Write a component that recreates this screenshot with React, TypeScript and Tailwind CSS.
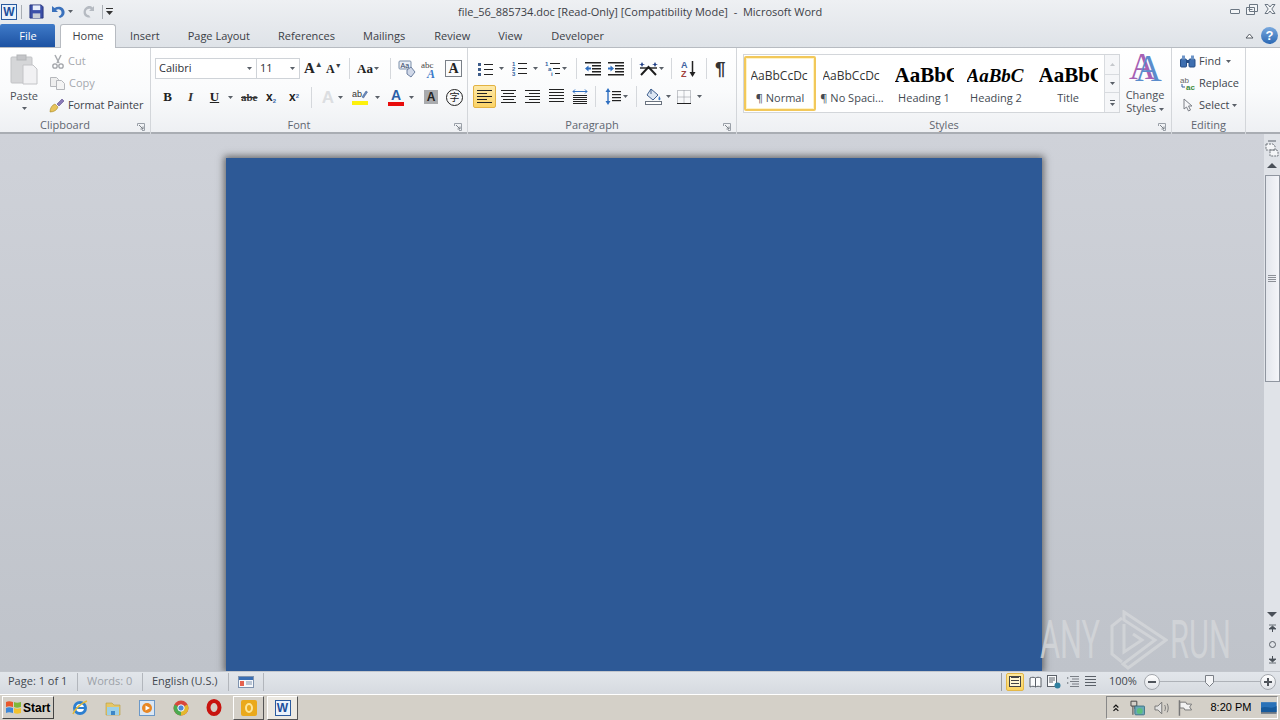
import type { ReactNode } from "react";

const FONT = "font-['Open_Sans','Noto_Sans',sans-serif]";

// ─── small helpers ─────────────────────────────────────────
const Caret = ({ className = "" }: { className?: string }) => (
  <svg width="5" height="3" viewBox="0 0 5 3" className={className}>
    <path d="M0 0h5L2.5 3z" fill="#5a6068" />
  </svg>
);

const Sep = ({ className = "" }: { className?: string }) => (
  <div className={`w-px h-[21px] bg-[#d5d8dc] ${className}`} />
);

const Launcher = () => (
  <svg width="8" height="8" viewBox="0 0 8 8" className="absolute right-[5px] bottom-[3px]">
    <path d="M0.5 3V0.5H7.5V7.5H5" fill="none" stroke="#9aa0a8" />
    <path d="M2 2l4 4M6 3.5V6H3.5" fill="none" stroke="#7c8289" />
  </svg>
);

const Group = ({ label, className, labelClass = "pr-[20px]", children }: { label: string; className: string; labelClass?: string; children: ReactNode }) => (
  <div className={`relative flex flex-col border-r border-[#d3d6da] h-[86px] ${className}`}>
    <div className="flex-1">{children}</div>
    <div className={`h-[16px] text-center text-[11px] leading-[14px] text-[#5f6670] ${labelClass}`}>{label}</div>
    <Launcher />
  </div>
);

const Lines = ({ w = 15, rows = 5, color = "#222" }: { w?: number; rows?: number; color?: string }) => (
  <svg width={w} height={rows * 3} viewBox={`0 0 ${w} ${rows * 3}`}>
    {Array.from({ length: rows }).map((_, i) => (
      <rect key={i} x="0" y={i * 3} width={w} height="1" fill={color} />
    ))}
  </svg>
);

// ─── ribbon icons ──────────────────────────────────────────
const BulletIcon = () => (
  <svg width="15" height="14" viewBox="0 0 15 14">
    {[1, 6, 11].map((y) => (
      <g key={y}>
        <rect x="0" y={y} width="3" height="3" fill="#3e5c8a" />
        <rect x="6" y={y + 1} width="9" height="1" fill="#222" />
      </g>
    ))}
  </svg>
);

const NumberIcon = () => (
  <svg width="15" height="15" viewBox="0 0 15 15">
    {[1, 6, 11].map((y, i) => (
      <g key={y}>
        <text x="0" y={y + 4} fontSize="6" fontWeight="700" fill="#2e5f9e" fontFamily="Liberation Sans">
          {i + 1}
        </text>
        <rect x="6" y={y + 1} width="9" height="1" fill="#222" />
      </g>
    ))}
  </svg>
);

const MultiIcon = () => (
  <svg width="15" height="15" viewBox="0 0 15 15">
    <text x="0" y="5" fontSize="6" fontWeight="700" fill="#2e5f9e" fontFamily="Liberation Sans">1</text>
    <rect x="5" y="2" width="10" height="1" fill="#222" />
    <text x="3" y="10" fontSize="6" fontWeight="700" fill="#2e5f9e" fontFamily="Liberation Sans">a</text>
    <rect x="8" y="7" width="7" height="1" fill="#222" />
    <text x="6" y="15" fontSize="6" fontWeight="700" fill="#2e5f9e" fontFamily="Liberation Sans">i</text>
    <rect x="10" y="12" width="5" height="1" fill="#222" />
  </svg>
);

const IndentIcon = ({ flip = false }: { flip?: boolean }) => (
  <svg width="16" height="14" viewBox="0 0 16 14">
    {[0, 3, 6, 9, 12].map((y) => (
      <rect key={y} x={y === 0 || y === 12 ? 0 : 7} y={y} width={y === 0 || y === 12 ? 16 : 9} height="1.5" fill="#222" />
    ))}
    <path d={flip ? "M6 6.5L2.5 3.5v2H0v2h2.5v2z" : "M0 6.5l3.5-3v2H6v2H3.5v2z"} fill="#2f6fc0" />
  </svg>
);

const ChineseLayoutIcon = () => (
  <svg width="19" height="14" viewBox="0 0 19 14">
    <path d="M2 13L9.5 5 17 13" fill="none" stroke="#1d1d1d" strokeWidth="2" />
    <path d="M1 6h17" stroke="#1d1d1d" strokeWidth="1.4" />
    <path d="M3 0l1 2 2 .5-2 .5-1 2-1-2-2-.5 2-.5zM16 0l1 2 2 .5-2 .5-1 2-1-2-2-.5 2-.5z" fill="#1f3f86" />
  </svg>
);

const SortIcon = () => (
  <svg width="16" height="18" viewBox="0 0 16 18">
    <text x="0" y="8" fontSize="9" fontWeight="700" fill="#3d62a0" fontFamily="Liberation Sans">A</text>
    <text x="0" y="17" fontSize="9" fontWeight="700" fill="#a0413c" fontFamily="Liberation Sans">Z</text>
    <path d="M11.5 1v14" stroke="#222" strokeWidth="1.5" />
    <path d="M8.5 12l3 5 3-5z" fill="#222" />
  </svg>
);

const LineSpacingIcon = () => (
  <svg width="16" height="17" viewBox="0 0 16 17">
    <path d="M3 0L.5 4h5zM3 17L.5 13h5z" fill="#2f6fc0" />
    <rect x="2.3" y="4" width="1.4" height="9" fill="#2f6fc0" />
    {[3, 6, 9, 12].map((y) => (
      <rect key={y} x="7" y={y} width="9" height="1.2" fill="#222" />
    ))}
  </svg>
);

const ShadingIcon = () => (
  <svg width="18" height="17" viewBox="0 0 18 17">
    <path d="M6 1l7 6-5 5-6-5z" fill="#dce6f2" stroke="#40608f" />
    <path d="M6 1V6" stroke="#40608f" />
    <path d="M14 8c1.5 2 2 3 1 4-1 .5-2-.5-1.5-1.5z" fill="#3c78c0" />
    <rect x="0.5" y="13.5" width="16" height="3" fill="#fff" stroke="#6b7480" />
  </svg>
);

const BorderIcon = () => (
  <svg width="14" height="14" viewBox="0 0 14 14">
    <path d="M.5.5h13v13H.5zM7 .5v13M.5 7h13" fill="none" stroke="#8c9198" strokeDasharray="1 1" />
    <path d="M0 13.5h14" stroke="#222" />
  </svg>
);

// ─── title bar + tabs ──────────────────────────────────────
const TitleBar = () => (
  <div className="relative flex items-center h-[23px] pl-[1px]">
    <div className="flex items-center justify-center w-[16px] h-[16px] bg-[#eaf2fb] border border-[#2a5a9e] text-[#1c4f9c] text-[12px] font-bold leading-none font-['Liberation_Sans']">
      W
    </div>
    <div className="w-px h-[14px] bg-[#a9aeb4] ml-[4px]" />
    <svg width="15" height="15" viewBox="0 0 16 16" className="ml-[7px]">
      <path d="M1 1h12l2 2v12H1z" fill="#3b4fa8" stroke="#27357c" />
      <rect x="4" y="1.5" width="8" height="5" fill="#e8eefb" />
      <rect x="4" y="10" width="8" height="5" fill="#c8cdd6" />
    </svg>
    <svg width="14" height="14" viewBox="0 0 14 14" className="ml-[7px]">
      <path d="M1 1v6h6L5 5c2.500-1.500 5-.5 5.500 2 .3 2-1 3.800-3 4.500l1.500 1.500c3-.8 5-3.500 4.500-6.500C13 2.500 8 0 3.500 3z" fill="#3a71bc" />
    </svg>
    <Caret className="ml-[3px]" />
    <svg width="13" height="13" viewBox="0 0 13 13" className="ml-[10px]">
      <path d="M11 1v5H6l1.800-1.800C6 3 3 4.200 2.800 6.800c-.1 2 1.400 3.400 3.200 3.500L7.500 12.500C3.500 13 .2 10.500.6 6.500 1 2.500 6-1 9.600 2.500z" fill="#b5bac1" />
    </svg>
    <div className="w-px h-[14px] bg-[#a9aeb4] ml-[6px]" />
    <svg width="7" height="7" viewBox="0 0 7 7" className="ml-[3px]">
      <path d="M0 0h7v1H0zM0 3h7L3.500 7z" fill="#333" />
    </svg>
    <div className="absolute left-[458px] top-[4px] text-[11px] leading-[15px] text-[#3c4046] whitespace-pre">
      file_56_885734.doc [Read-Only] [Compatibility Mode]  -  Microsoft Word
    </div>
    <div className="ml-auto flex items-center gap-[6px] pr-[4px] pb-[5px]">
      <div className="w-[10px] h-[5px] mt-[4px] border border-[#6b7682] rounded-[1px] bg-[#f3f5f7]" />
      <svg width="12" height="11" viewBox="0 0 12 11">
        <path d="M3.500.5h8v7h-8zM.5 3.500h8v7h-8z" fill="#f3f5f7" stroke="#6b7682" />
        <path d="M2.500 5.500h4" stroke="#6b7682" />
      </svg>
      <svg width="12" height="10" viewBox="0 0 12 10">
        <path d="M1 .5h3l2 2.500L8 .5h3L7.800 5 11 9.500H8L6 7 4 9.500H1L4.200 5z" fill="#f3f5f7" stroke="#6b7682" />
      </svg>
    </div>
  </div>
);

const TabStrip = () => (
  <div className="flex items-end h-[24px] relative">
    <div className="w-[55px] h-[23px] rounded-t-[2px] bg-gradient-to-b from-[#3f7bc9] to-[#1d52a2] text-white text-[11px] leading-[23px] pl-[1px] text-center">
      File
    </div>
    <div className="ml-[5px] w-[56px] h-[24px] bg-white border border-b-0 border-[#b7bbc1] rounded-t-[3px] text-[11px] leading-[22px] text-center text-[#3b4046] z-10 -mb-px">
      Home
    </div>
    <div className="flex gap-[28px] ml-[14px] h-[23px] text-[11px] leading-[23px] text-[#3b4046]">
      <span>Insert</span>
      <span>Page Layout</span>
      <span>References</span>
      <span>Mailings</span>
      <span className="ml-[1px]">Review</span>
      <span>View</span>
      <span className="ml-[1px]">Developer</span>
    </div>
    <div className="ml-auto flex items-center h-[23px] pr-[2px] gap-[7px]">
      <svg width="9" height="6" viewBox="0 0 9 6">
        <path d="M1 5l3.500-4L8 5z" fill="#fff" stroke="#555b63" />
      </svg>
      <div className="w-[17px] h-[17px] rounded-full bg-gradient-to-b from-[#79a9de] to-[#2a68b4] text-white text-[13px] font-bold leading-[17px] text-center font-['Liberation_Sans']">
        ?
      </div>
    </div>
  </div>
);

// ─── ribbon groups ─────────────────────────────────────────
const ClipboardGroup = () => (
  <Group label="Clipboard" className="w-[151px]">
    <div className="flex pt-[5px]">
      <div className="w-[48px] flex flex-col items-center">
        <svg width="28" height="31" viewBox="0 0 28 31" className="mt-[1px]">
          <rect x="1" y="3" width="21" height="26" rx="1" fill="#d5d6d8" stroke="#c2c3c6" />
          <rect x="7" y="1" width="9" height="5" fill="#c4c5c8" stroke="#b4b5b8" />
          <path d="M13 11h10l4 4v15H13z" fill="#f1f1f3" stroke="#c3c4c7" />
        </svg>
        <div className="mt-[3px] text-[11px] leading-[15px] text-[#4b5058]">Paste</div>
        <Caret className="mt-[4px]" />
      </div>
      <div className="flex flex-col gap-[6px] text-[11px] leading-[16px]">
        <div className="flex items-center h-[16px] text-[#a5a8ad]">
          <svg width="14" height="15" viewBox="0 0 14 15" className="ml-[3px]">
            <path d="M4 1l4 8M10 1L6 9" stroke="#a9acb0" strokeWidth="1.500" />
            <circle cx="4" cy="12" r="2.200" fill="none" stroke="#a0a3a8" strokeWidth="1.300" />
            <circle cx="10" cy="12" r="2.200" fill="none" stroke="#a0a3a8" strokeWidth="1.300" />
          </svg>
          <span className="ml-[3px]">Cut</span>
        </div>
        <div className="flex items-center h-[16px] text-[#a5a8ad]">
          <svg width="15" height="14" viewBox="0 0 15 14" className="ml-[2px]">
            <path d="M.5 1.500h6l2 2v7h-8z" fill="#eee" stroke="#b5b7bb" />
            <path d="M6.500 4.500h5l3 3v6h-8z" fill="#f4f4f4" stroke="#b5b7bb" />
          </svg>
          <span className="ml-[4px]">Copy</span>
        </div>
        <div className="flex items-center h-[16px] text-[#3f444b] whitespace-nowrap">
          <svg width="16" height="15" viewBox="0 0 16 15" className="ml-[1px]">
            <path d="M1 14c0-4 2-7 5-8l3 3c-1 3-4 5-8 5z" fill="#e8c35a" stroke="#a68a2c" strokeWidth=".6" />
            <path d="M8 6l5-5 2 2-5 5z" fill="#8a7bb8" stroke="#5d4f8c" strokeWidth=".6" />
          </svg>
          <span className="ml-[3px] tracking-[-0.1px]">Format Painter</span>
        </div>
      </div>
    </div>
  </Group>
);

const FontGroup = () => (
  <Group label="Font" className="w-[317px]">
    <div className="flex items-center h-[21px] mt-[10px] ml-[4px]">
      <div className="w-[102px] h-[21px] flex items-center justify-between bg-white border border-[#cfd3d8] pl-[3px] pr-[4px] text-[11px] text-[#2d3137]">
        Calibri <Caret />
      </div>
      <div className="w-[43px] h-[21px] flex items-center justify-between bg-white border border-l-0 border-[#cfd3d8] pl-[3px] pr-[4px] text-[11px] text-[#2d3137]">
        11 <Caret />
      </div>
      <div className="ml-[4px] w-[16px] font-['Liberation_Serif'] font-bold text-[15px] text-[#222] leading-none">
        A<span className="text-[8px] align-top text-[#3a3f46]">▲</span>
      </div>
      <div className="ml-[6px] w-[16px] font-['Liberation_Serif'] font-bold text-[12px] text-[#222] leading-none">
        A<span className="text-[7px] align-top text-[#3a3f46]">▼</span>
      </div>
      <Sep className="ml-[7px]" />
      <div className="ml-[7px] w-[25px] flex items-center gap-[1px] font-['Liberation_Serif'] font-bold text-[13px] text-[#222]">
        Aa <Caret />
      </div>
      <Sep className="ml-[8px]" />
      <svg width="18" height="18" viewBox="0 0 18 18" className="ml-[7px]">
        <rect x="1" y="1" width="12" height="8" rx="1" fill="#e9eef6" stroke="#7b8ea8" />
        <text x="2.500" y="8" fontSize="7" fill="#2a3a5c" fontFamily="Liberation Sans">Aa</text>
        <path d="M9 10l4-3 4 5-4 5-4-3z" fill="#d0d8e8" stroke="#6c7fa0" />
      </svg>
      <svg width="17" height="18" viewBox="0 0 17 18" className="ml-[5px]">
        <text x="0" y="8" fontSize="9" fill="#444" fontFamily="Liberation Serif">abc</text>
        <text x="6" y="18" fontSize="12" fontWeight="700" fontStyle="italic" fill="#3878c8" fontFamily="Liberation Serif">A</text>
      </svg>
      <div className="ml-[7px] w-[17px] h-[17px] border border-[#7a8088] bg-[#fafbfc] text-center font-['Liberation_Serif'] font-bold text-[14px] leading-[15px] text-[#222]">
        A
      </div>
    </div>
    <div className="flex items-center h-[22px] mt-[7px] ml-[9px]">
      <div className="w-[15px] text-center font-['Liberation_Serif'] font-bold text-[13px] text-[#222]">B</div>
      <div className="ml-[8px] w-[15px] text-center font-['Liberation_Serif'] italic font-bold text-[13px] text-[#333]">I</div>
      <div className="ml-[9px] w-[15px] text-center font-['Liberation_Serif'] font-bold underline text-[13px] text-[#222]">U</div>
      <Caret className="ml-[6px]" />
      <div className="ml-[8px] w-[16px] text-center font-['Liberation_Serif'] line-through text-[11px] font-bold text-[#333]">abe</div>
      <div className="ml-[9px] w-[14px] font-['Liberation_Sans'] font-bold text-[12px] text-[#222]">
        x<sub className="text-[6px] text-[#3a68a8]">2</sub>
      </div>
      <div className="ml-[9px] w-[14px] font-['Liberation_Sans'] font-bold text-[12px] text-[#222]">
        x<sup className="text-[6px] text-[#3a68a8]">2</sup>
      </div>
      <Sep className="ml-[8px]" />
      <div className="ml-[8px] w-[16px] text-center font-['Liberation_Sans'] font-bold text-[17px] leading-none text-[#dcdee1]">A</div>
      <Caret className="ml-[2px]" />
      <svg width="16" height="18" viewBox="0 0 16 18" className="ml-[9px]">
        <text x="0" y="9" fontSize="9" fill="#333" fontFamily="Liberation Sans">ab</text>
        <path d="M10 9l4-6 1.500 1-4 6z" fill="#6a8ac0" stroke="#3b5888" strokeWidth=".5" />
        <rect x="0" y="13" width="16" height="4" fill="#fdf10c" />
      </svg>
      <Caret className="ml-[7px]" />
      <div className="ml-[8px] w-[16px] flex flex-col items-center">
        <span className="font-['Liberation_Sans'] font-bold text-[14px] leading-[13px] text-[#2b5fa8]">A</span>
        <span className="w-[16px] h-[4px] bg-[#e80c0c]" />
      </div>
      <Caret className="ml-[5px]" />
      <div className="ml-[10px] w-[14px] h-[14px] bg-[#a9abae] text-center font-['Liberation_Sans'] font-bold text-[12px] leading-[14px] text-[#222]">
        A
      </div>
      <div className="ml-[8px] w-[17px] h-[17px] rounded-full border-[1.5px] border-[#222] text-center text-[10px] leading-[14px] text-[#222] font-['Noto_Sans_CJK_SC',sans-serif]">
        字
      </div>
    </div>
  </Group>
);

const ParagraphGroup = () => (
  <Group label="Paragraph" className="w-[269px]">
    <div className="flex items-center h-[21px] mt-[10px] ml-[10px]">
      <BulletIcon />
      <Caret className="ml-[6px]" />
      <div className="ml-[8px]"><NumberIcon /></div>
      <Caret className="ml-[6px]" />
      <div className="ml-[7px]"><MultiIcon /></div>
      <Caret className="ml-[2px]" />
      <Sep className="ml-[9px]" />
      <div className="ml-[8px]"><IndentIcon /></div>
      <div className="ml-[7px]"><IndentIcon flip /></div>
      <Sep className="ml-[7px]" />
      <div className="ml-[7px]"><ChineseLayoutIcon /></div>
      <Caret className="ml-[1px]" />
      <Sep className="ml-[7px]" />
      <div className="ml-[9px]"><SortIcon /></div>
      <Sep className="ml-[9px]" />
      <div className="ml-[8px] font-['Liberation_Sans'] font-bold text-[19px] leading-none text-[#333]">¶</div>
    </div>
    <div className="flex items-center h-[23px] mt-[6px] ml-[5px]">
      <div className="w-[23px] h-[23px] flex items-center justify-center rounded-[2px] border border-[#e2b243] bg-gradient-to-b from-[#fde9a8] to-[#fbd365]">
        <svg width="15" height="13" viewBox="0 0 15 13">
          {[0, 3, 6, 9, 12].map((y, i) => (
            <rect key={y} x="0" y={y} width={i % 2 ? 10 : 15} height="1" fill="#222" />
          ))}
        </svg>
      </div>
      <svg width="15" height="13" viewBox="0 0 15 13" className="ml-[5px]">
        {[0, 3, 6, 9, 12].map((y, i) => (
          <rect key={y} x={i % 2 ? 2 : 0} y={y} width={i % 2 ? 11 : 15} height="1" fill="#222" />
        ))}
      </svg>
      <svg width="15" height="13" viewBox="0 0 15 13" className="ml-[9px]">
        {[0, 3, 6, 9, 12].map((y, i) => (
          <rect key={y} x={i % 2 ? 4 : 0} y={y} width={i % 2 ? 11 : 15} height="1" fill="#222" />
        ))}
      </svg>
      <div className="ml-[9px] flex"><Lines w={15} rows={5} /></div>
      <svg width="16" height="15" viewBox="0 0 16 15" className="ml-[8px]">
        <path d="M1 2.500h14M1 2.500l2-2M1 2.500l2 2M15 2.500l-2-2M15 2.500l-2 2" stroke="#2f6fc0" fill="none" />
        {[6, 8, 10, 12, 14].map((y) => (
          <rect key={y} x="1" y={y} width="14" height="1" fill="#222" />
        ))}
      </svg>
      <Sep className="ml-[7px]" />
      <div className="ml-[9px]"><LineSpacingIcon /></div>
      <Caret className="ml-[2px]" />
      <Sep className="ml-[8px]" />
      <div className="ml-[8px]"><ShadingIcon /></div>
      <Caret className="ml-[3px]" />
      <div className="ml-[6px]"><BorderIcon /></div>
      <Caret className="ml-[6px]" />
    </div>
  </Group>
);

const STYLE_ITEMS = [
  { sample: "AaBbCcDc", label: "¶ Normal", cls: "text-[12px] font-['Open_Sans'] text-[#333]", box: true },
  { sample: "AaBbCcDc", label: "¶ No Spaci...", cls: "text-[12px] font-['Open_Sans'] text-[#333]", box: false },
  { sample: "AaBbC", label: "Heading 1", cls: "text-[21px] font-bold font-['Liberation_Serif'] text-black", box: false },
  { sample: "AaBbC", label: "Heading 2", cls: "text-[19px] font-bold italic font-['Liberation_Serif'] text-black", box: false },
  { sample: "AaBbC", label: "Title", cls: "text-[21px] font-bold font-['Liberation_Serif'] text-black", box: false },
];

const StylesGroup = () => (
  <Group label="Styles" className="w-[435px]">
    <div className="flex items-start pt-[6px] pl-[6px]">
      <div className="flex w-[377px] h-[59px] bg-white border border-[#d3d6da] pl-[0px] items-center">
        {STYLE_ITEMS.map((s) => (
          <div
            key={s.label}
            className={`w-[72px] h-[55px] shrink-0 flex flex-col items-center overflow-hidden ${
              s.box ? "border-2 border-[#f2c85a] rounded-[2px] shadow-[inset_0_0_0_1px_#fff3c6]" : "border-2 border-transparent"
            }`}
          >
            <div className={`h-[31px] leading-[35px] w-[59px] overflow-hidden whitespace-nowrap ${s.cls}`}>{s.sample}</div>
            <div className="mt-[1px] text-[11px] leading-[15px] text-[#444a52] whitespace-nowrap">{s.label}</div>
          </div>
        ))}
        <div className="ml-auto w-[15px] h-[57px] flex flex-col items-center bg-[#f5f6f8] border-l border-[#d8dbdf]">
          <div className="h-[19px] flex items-center"><Caret className="rotate-180 opacity-30" /></div>
          <div className="h-[19px] w-full flex items-center justify-center border-y border-[#d8dbdf]"><Caret /></div>
          <div className="h-[19px] flex flex-col gap-[2px] items-center justify-center">
            <div className="w-[5px] h-px bg-[#5a6068]" />
            <Caret />
          </div>
        </div>
      </div>
      <div className="ml-[2px] w-[46px] flex flex-col items-center">
        <div className="relative w-[30px] h-[29px] font-['Liberation_Serif'] text-[37px] leading-[29px]">
          <span className="absolute -left-[1px] -top-[2px] text-[#a661b4]">A</span>
          <span className="absolute left-[5px] top-0 text-[#5b8ccc]">A</span>
        </div>
        <div className="mt-[5px] text-[11px] leading-[13px] text-center text-[#4b5058]">
          Change
          <br />
          Styles <Caret className="inline align-middle" />
        </div>
      </div>
    </div>
  </Group>
);

const EditingGroup = () => (
  <Group label="Editing" labelClass="" className="w-[74px] [&>svg]:hidden">
    <div className="flex flex-col gap-[6px] pt-[5px] pl-[8px] text-[11px] leading-[16px] text-[#41464d]">
      <div className="flex items-center h-[16px]">
        <svg width="16" height="13" viewBox="0 0 16 13">
          <rect x="0.500" y="4" width="6" height="8" rx="1" fill="#3e6fb0" stroke="#264e86" />
          <rect x="9" y="4" width="6" height="8" rx="1" fill="#3e6fb0" stroke="#264e86" />
          <rect x="2" y="0.500" width="3" height="4" fill="#6e95c8" />
          <rect x="11" y="0.500" width="3" height="4" fill="#6e95c8" />
          <rect x="6" y="5" width="3" height="3" fill="#264e86" />
        </svg>
        <span className="ml-[3px]">Find</span>
        <Caret className="ml-[5px]" />
      </div>
      <div className="flex items-center h-[16px]">
        <svg width="16" height="15" viewBox="0 0 16 15">
          <text x="0" y="7" fontSize="8" fill="#666" fontFamily="Liberation Sans">ab</text>
          <text x="6" y="14" fontSize="8" fontWeight="700" fill="#3a8a3a" fontFamily="Liberation Sans">ac</text>
          <path d="M2 8v3h3" fill="none" stroke="#335c99" />
        </svg>
        <span className="ml-[3px]">Replace</span>
      </div>
      <div className="flex items-center h-[16px]">
        <svg width="11" height="14" viewBox="0 0 11 14" className="ml-[3px]">
          <path d="M1 1v10l2.500-2 2 4 2-1-2-4H9z" fill="#f6f7f9" stroke="#7c8087" />
        </svg>
        <span className="ml-[5px]">Select</span>
        <Caret className="ml-[3px]" />
      </div>
    </div>
  </Group>
);

// ─── vertical scrollbar ────────────────────────────────────
const ScrollBar = () => (
  <div className="w-[16px] shrink-0 flex flex-col items-center bg-[#e0e3e8]">
    <div className="w-[8px] h-[2px] mt-[6px] bg-[#9da2a9]" />
    <svg width="14" height="14" viewBox="0 0 14 14" className="mt-[1px]">
      <path d="M1 1h7l2 2v4H1zM5 7h7l1 2v4H5z" fill="#f4f5f7" stroke="#6f747b" strokeDasharray="2 1" />
    </svg>
    <div className="h-[14px] mt-[1px] flex items-center">
      <svg width="10" height="5" viewBox="0 0 10 5"><path d="M0 5l5-5 5 5z" fill="#4a5058" /></svg>
    </div>
    <div className="w-[15px] h-[207px] mt-[3px] flex items-center justify-center border border-[#9096a0] bg-gradient-to-r from-[#e3e6ec] to-[#f4f5f9]">
      <div className="w-[8px] flex flex-col gap-[1px]">
        <div className="h-px bg-[#8c9097]" />
        <div className="h-px bg-[#8c9097]" />
        <div className="h-px bg-[#8c9097]" />
        <div className="h-px bg-[#8c9097]" />
      </div>
    </div>
    <div className="flex-1" />
    <svg width="10" height="5" viewBox="0 0 10 5" className="mb-[7px]"><path d="M0 0l5 5 5-5z" fill="#4a5058" /></svg>
    <svg width="7" height="8" viewBox="0 0 7 8" className="mb-[9px]">
      <path d="M0 1h7M0 5l3.500-3L7 5z" stroke="#4a5058" fill="#4a5058" strokeWidth=".8" />
      <path d="M3.500 4v4" stroke="#4a5058" />
    </svg>
    <div className="w-[7px] h-[7px] mb-[8px] rounded-full border border-[#5a6068]" />
    <svg width="7" height="8" viewBox="0 0 7 8" className="mb-[7px]">
      <path d="M0 7h7M0 3l3.500 3L7 3z" stroke="#4a5058" fill="#4a5058" strokeWidth=".8" />
      <path d="M3.500 0v4" stroke="#4a5058" />
    </svg>
  </div>
);

// ─── status bar + taskbar ──────────────────────────────────
const StatusBar = () => (
  <div className="h-[23px] pb-[3px] flex items-center bg-gradient-to-b from-[#e2e6eb] to-[#d6dae0] text-[11px] text-[#43484f] border-t border-[#c2c6cc]">
    <span className="ml-[8px] w-[69px]">Page: 1 of 1</span>
    <div className="w-px h-[18px] bg-[#b2b6bc]" />
    <span className="ml-[9px] w-[55px] text-[#9ca1a8]">Words: 0</span>
    <div className="w-px h-[18px] bg-[#b2b6bc]" />
    <span className="ml-[9px] w-[76px] whitespace-nowrap">English (U.S.)</span>
    <div className="w-px h-[18px] bg-[#b2b6bc]" />
    <svg width="16" height="13" viewBox="0 0 16 13" className="ml-[9px]">
      <rect x=".5" y="1.500" width="15" height="11" fill="#f6f8fb" stroke="#7f93ae" />
      <rect x="1" y="2" width="14" height="3" fill="#3a6fb4" />
      <rect x="2" y="6" width="4" height="5" fill="#e5614e" />
      <path d="M8 7h6M8 9h6" stroke="#7f93ae" />
    </svg>
    <div className="ml-[9px] w-px h-[18px] bg-[#b2b6bc]" />
    <div className="ml-auto w-px h-[18px] bg-[#9a9ea4]" />
    <div className="ml-[4px] w-[18px] h-[18px] flex items-center justify-center border border-[#e3b748] rounded-[2px] bg-gradient-to-b from-[#fde89a] to-[#fbd35e]">
      <div className="border border-[#444] px-[1px] bg-[#fff6d0]"><Lines w={8} rows={3} color="#444" /></div>
    </div>
    <svg width="13" height="12" viewBox="0 0 13 12" className="ml-[5px]">
      <path d="M6.500 2C5 1 3 1 1 2v9c2-1 4-1 5.500 0 1.500-1 3.500-1 5.500 0V2c-2-1-4-1-5.500 0zM6.500 2v9" fill="#fafbfc" stroke="#5a6068" />
    </svg>
    <svg width="14" height="14" viewBox="0 0 14 14" className="ml-[5px]">
      <rect x=".5" y=".5" width="9" height="11" fill="#fafbfc" stroke="#5a6068" />
      <path d="M2 3h6M2 5h6M2 7h4" stroke="#5a6068" />
      <circle cx="10.500" cy="10.500" r="3" fill="#2f7f9f" />
    </svg>
    <svg width="12" height="11" viewBox="0 0 12 11" className="ml-[6px]">
      <path d="M3 .5h9M5 3h7M3 5.500h9M5 8h7M3 10.500h9" stroke="#7a7f86" />
      <path d="M0 1l2 1-2 1zM0 6l2 1-2 1z" fill="#7a7f86" />
    </svg>
    <div className="ml-[6px] flex"><Lines w={11} rows={4} color="#5a6068" /></div>
    <span className="ml-[13px] w-[28px] whitespace-nowrap">100%</span>
    <div className="ml-[7px] w-[16px] h-[16px] flex items-center justify-center rounded-full border border-[#a3a7ad] bg-gradient-to-b from-white to-[#dfe2e7]">
      <div className="w-[8px] h-[2px] bg-[#4e535a]" />
    </div>
    <div className="relative w-[100px] h-px bg-[#aeb2b8]">
      <svg width="9" height="12" viewBox="0 0 9 12" className="absolute left-[45px] -top-[6px]">
        <path d="M.5.5h8v7l-4 4-4-4z" fill="#f4f5f7" stroke="#7a7f86" />
      </svg>
    </div>
    <div className="w-[16px] h-[16px] mr-[4px] flex items-center justify-center rounded-full border border-[#a3a7ad] bg-gradient-to-b from-white to-[#dfe2e7] relative">
      <div className="w-[8px] h-[2px] bg-[#4e535a]" />
      <div className="absolute w-[2px] h-[8px] bg-[#4e535a]" />
    </div>
  </div>
);

const TaskButton = ({ active = false, children }: { active?: boolean; children: ReactNode }) => (
  <div
    className={`w-[31px] h-[24px] flex items-center justify-center border ${
      active ? "border-t-[#fff] border-l-[#fff] border-r-[#555] border-b-[#555] bg-[#ece9e2]" : "border-t-[#fff] border-l-[#fff] border-r-[#555] border-b-[#555] bg-[#d4d0c8]"
    }`}
  >
    {children}
  </div>
);

const Taskbar = () => (
  <div className="h-[26px] flex items-center bg-[#d4d0c8] border-t border-white font-['Liberation_Sans']">
    <div className="ml-[2px] w-[52px] h-[23px] flex items-center border border-t-white border-l-white border-r-[#444] border-b-[#444] text-[12px] font-bold text-black">
      <svg width="17" height="15" viewBox="0 0 17 15" className="ml-[2px]">
        <path d="M1 2c2-1 4-1 7 0v5C5 6 3 6 1 7z" fill="#e8582c" />
        <path d="M9 2c2 1 4 1 7 0v5c-3 1-5 1-7 0z" fill="#7fb83a" />
        <path d="M1 8c2-1 4-1 7 0v5c-3-1-5-1-7 0z" fill="#3d87d8" />
        <path d="M9 8c2 1 4 1 7 0v5c-3 1-5 1-7 0z" fill="#f2c22e" />
      </svg>
      <span className="ml-[1px]">Start</span>
    </div>
    <svg width="16" height="16" viewBox="0 0 16 16" className="ml-[18px]">
      <circle cx="8" cy="8" r="5.500" fill="#fff" stroke="#2d7fd0" strokeWidth="3" />
      <path d="M4 8h8" stroke="#2d7fd0" strokeWidth="2" />
      <path d="M1 14C3 9 9 3 15 1" fill="none" stroke="#e2b93a" strokeWidth="1.500" />
    </svg>
    <svg width="16" height="16" viewBox="0 0 16 16" className="ml-[17px]">
      <path d="M1 3h6l2 2h6v10H1z" fill="#e6c766" stroke="#b79a3c" strokeWidth=".6" />
      <rect x="2" y="7" width="12" height="8" fill="#9cd0e8" />
      <rect x="6" y="11" width="4" height="4" fill="#3d87c8" />
    </svg>
    <svg width="16" height="16" viewBox="0 0 16 16" className="ml-[18px]">
      <rect x=".5" y=".5" width="15" height="15" fill="#dbe7f4" stroke="#6b98c8" />
      <circle cx="8" cy="8" r="5" fill="#e88724" />
      <path d="M6.500 5.500L11 8l-4.500 2.500z" fill="#fff" />
    </svg>
    <svg width="16" height="16" viewBox="0 0 16 16" className="ml-[18px]">
      <circle cx="8" cy="8" r="7.500" fill="#d8473c" />
      <path d="M8 8L14.500 4.500A7.500 7.500 0 0 1 8 15.500z" fill="#e3b82e" />
      <path d="M8 8L8 15.500A7.500 7.500 0 0 1 1.500 4.500z" fill="#4caa50" />
      <circle cx="8" cy="8" r="3.200" fill="#4e88d8" stroke="#fff" />
    </svg>
    <svg width="16" height="17" viewBox="0 0 16 17" className="ml-[17px]">
      <ellipse cx="8" cy="8.500" rx="5.500" ry="6.500" fill="none" stroke="#c8140f" strokeWidth="4" />
    </svg>
    <div className="ml-[11px] flex gap-[3px]">
      <TaskButton>
        <div className="w-[16px] h-[16px] rounded-[2px] bg-[#eaa91c] flex items-center justify-center">
          <div className="w-[8px] h-[10px] rounded-[50%] border-2 border-[#fde69a]" />
        </div>
      </TaskButton>
      <TaskButton active>
        <div className="w-[16px] h-[16px] bg-[#eaf2fb] border border-[#2a5a9e] text-[#1c4f9c] text-[12px] font-bold leading-[14px] text-center">W</div>
      </TaskButton>
    </div>
    <div className="ml-auto mr-[2px] w-[172px] h-[23px] flex items-center border border-t-[#888] border-l-[#888] border-r-white border-b-white">
      <svg width="6" height="8" viewBox="0 0 6 8" className="ml-[6px]">
        <path d="M.5 3.500L3 1l2.500 2.500M.5 7L3 4.500 5.500 7" fill="none" stroke="#111" strokeWidth="1.200" />
      </svg>
      <svg width="16" height="16" viewBox="0 0 16 16" className="ml-[11px]">
        <path d="M1 1h6v5H1zM3 6v9M5 6v3" fill="none" stroke="#444" />
        <rect x="5" y="6" width="10" height="9" rx="1" fill="#6aa8b8" stroke="#3f7486" />
        <circle cx="10" cy="11" r="3" fill="#5cbf7c" />
      </svg>
      <svg width="16" height="14" viewBox="0 0 16 14" className="ml-[9px]">
        <path d="M1 5h3l4-4v12l-4-4H1z" fill="#e3e3e3" stroke="#777" />
        <path d="M11 4c1 2 1 4 0 6M13.500 2.500c1.500 3 1.500 6 0 9" fill="none" stroke="#777" />
      </svg>
      <svg width="15" height="16" viewBox="0 0 15 16" className="ml-[8px]">
        <path d="M1.500 0v16" stroke="#777" strokeWidth="1.500" />
        <path d="M2 2h6l1 2h5l-2 3 2 3H7l-1-2H2z" fill="#f2f2f2" stroke="#777" />
      </svg>
      <span className="ml-[18px] text-[11px] text-black whitespace-nowrap">8:20 PM</span>
      <svg width="16" height="12" viewBox="0 0 16 12" className="ml-[10px]">
        <rect width="16" height="10" fill="#2a72b8" />
        <rect y="10" width="16" height="2" fill="#6c7884" />
        <path d="M0 6c5-3 10 2 16-2v6H0z" fill="#175a9c" />
      </svg>
    </div>
  </div>
);

// ─── page ──────────────────────────────────────────────────
export default function App() {
  return (
    <div className={`relative w-[1280px] h-[720px] overflow-hidden flex flex-col bg-[#e9ecf0] ${FONT}`}>
      <div className="bg-gradient-to-b from-[#eef0f3] to-[#dfe3e8]">
        <TitleBar />
        <TabStrip />
      </div>
      <div className="flex h-[87px] bg-gradient-to-b from-white via-[#fafbfc] to-[#eef0f3] border-t border-[#b7bbc1] border-b-2 border-b-[#a9adb3]">
        <ClipboardGroup />
        <FontGroup />
        <ParagraphGroup />
        <StylesGroup />
        <EditingGroup />
      </div>
      <div className="flex-1 flex min-h-0 bg-gradient-to-b from-[#cfd2d9] to-[#bfc3ca]">
        <div className="flex-1 flex justify-center pt-[24px] overflow-hidden">
          <div className="ml-[4px] w-[816px] bg-[#2d5996] shadow-[0_0_7px_2px_rgba(50,50,50,0.65)]" />
        </div>
        <ScrollBar />
      </div>
      <StatusBar />
      <Taskbar />
      {/* watermark */}
      <div className="absolute left-[1040px] top-[610px] flex items-center h-[60px] text-[#d5d7da] pointer-events-none font-['Roboto']">
        <span className="w-[64px] text-[53px] font-normal leading-none origin-left scale-x-[0.58] inline-block opacity-80">ANY</span>
        <svg width="58" height="60" viewBox="0 0 58 60" className="ml-[6px] opacity-80" fill="none" stroke="currentColor" strokeWidth="3">
          <path d="M12 8L2 16v28l10 8" />
          <path d="M14 2l42 28-38 28-5-4 32-24L14 10z" />
          <path d="M14 14v28l18-12-9-6" />
        </svg>
        <span className="ml-[2px] w-[64px] text-[53px] font-normal leading-none origin-left scale-x-[0.58] inline-block opacity-80">RUN</span>
      </div>
    </div>
  );
}
